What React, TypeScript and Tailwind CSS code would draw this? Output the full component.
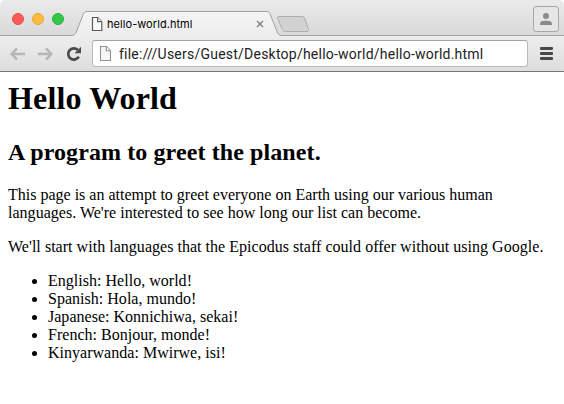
import React from "react";

const languages = [
  "English: Hello, world!",
  "Spanish: Hola, mundo!",
  "Japanese: Konnichiwa, sekai!",
  "French: Bonjour, monde!",
  "Kinyarwanda: Mwirwe, isi!",
];

function TabStrip() {
  return (
    <div className="relative flex h-[36px] bg-linear-to-b from-[#ebebeb] to-[#d9d9d9]">
      <div className="absolute inset-x-0 bottom-0 h-px bg-[#a5a5a5]" />
      <div className="flex w-[73px] gap-2 pt-[13px] pl-3">
        <span className="size-3 shrink-0 rounded-full border border-[#e94b48] bg-[#fc5b57]" />
        <span className="size-3 shrink-0 rounded-full border border-[#e5a336] bg-[#fdbc40]" />
        <span className="size-3 shrink-0 rounded-full border border-[#27b13b] bg-[#34c84a]" />
      </div>
      <div className="relative h-[36px] w-[208px]">
        <svg className="absolute inset-0" width="208" height="36" viewBox="0 0 208 36">
          <defs>
            <linearGradient id="tab" x1="0" y1="0" x2="0" y2="1">
              <stop offset="0" stopColor="#f5f5f5" />
              <stop offset="1" stopColor="#ededed" />
            </linearGradient>
          </defs>
          <path
            d="M-1 36V35.5C1.5 35.3 2.4 33.8 3.2 32L10 15C11 12.5 12 11.5 14 11.5H193C195.5 11.5 196.5 12.5 197.5 15L204 31.5C205 34 206 35.3 209 35.5V36Z"
            fill="url(#tab)"
          />
          <path
            d="M-1 35.5C1.5 35.3 2.4 33.8 3.2 32L10 15C11 12.5 12 11.5 14 11.5H193C195.5 11.5 196.5 12.5 197.5 15L204 31.5C205 34 206 35.3 209 35.5"
            fill="none"
            stroke="#a0a0a0"
          />
        </svg>
        <div className="relative flex h-full items-center pt-3 pr-[17px] pl-[18px]">
          <svg width="12" height="16" viewBox="0 0 12 16" fill="#fafafa" stroke="#5c5c5c" strokeWidth="1.2" className="shrink-0">
            <path d="M1.5 1.5h5.2l4.1 4.2v8.8H1.5z" />
            <path d="M6.6 1.5v4.2h4.2" />
          </svg>
          <span className="ml-1 flex-1 font-['Inter','Liberation_Sans',sans-serif] text-[11px] leading-4 tracking-[0.06px] whitespace-nowrap text-black">
            hello-world.html
          </span>
          <svg width="8" height="8" viewBox="0 0 8 8" stroke="#858585" strokeWidth="1.5">
            <path d="M1 1l6 6M7 1L1 7" />
          </svg>
        </div>
      </div>
      <svg className="mt-[15px] -ml-[5px]" width="34" height="18" viewBox="0 0 34 18">
        <path
          d="M3 1.5H26C27.5 1.5 28 2 28.6 3.4L32.4 13.5C33.1 15.4 32.7 16.5 31 16.5H9.5C8 16.5 7.1 16 6.5 14.5L1.7 3.5C1.2 2.1 1.5 1.5 3 1.5Z"
          fill="#d2d2d2"
          stroke="#adadad"
        />
      </svg>
      <div className="mt-[6px] mr-[5px] ml-auto flex h-[26px] w-[26px] items-center justify-center rounded-[3px] border border-[#a9a9a9] bg-[#e6e6e6]">
        <svg width="12" height="12" viewBox="0 0 12 12" fill="#8b8b8b">
          <circle cx="6" cy="3" r="3" />
          <path d="M0 12v-1C0 8.5 2.2 7.8 6 7.8s6 .7 6 3.2v1z" />
        </svg>
      </div>
    </div>
  );
}

function Toolbar() {
  return (
    <div className="flex h-[36px] items-center border-b border-[#777] bg-linear-to-b from-[#eeeeee] to-[#dddddd] px-[10px]">
      <svg width="15" height="14" viewBox="0 0 15 14" fill="none" stroke="#b6b6b6" strokeWidth="2.5">
        <path d="M7 1.3L1.7 7L7 12.7M2 7H15" />
      </svg>
      <svg className="ml-[13px]" width="15" height="14" viewBox="0 0 15 14" fill="none" stroke="#b6b6b6" strokeWidth="2.5">
        <path d="M8 1.3L13.3 7L8 12.7M13 7H0" />
      </svg>
      <svg className="ml-[13px]" width="16" height="16" viewBox="0 0 16 16" fill="none">
        <path d="M11.8 4A5.6 5.6 0 1 0 12.8 10.6" stroke="#4b4b4b" strokeWidth="2.7" />
        <path d="M15 .8V7.2H8.6z" fill="#4b4b4b" />
      </svg>
      <div className="ml-[10px] flex h-[27px] w-[436px] items-center rounded-[3px] border border-[#b9b9b9] border-t-[#a2a2a2] bg-white pl-[6px]">
        <svg width="13" height="17" viewBox="0 0 13 17" fill="#f6f6f6" stroke="#929292" strokeWidth="1.1" className="shrink-0">
          <path d="M1.5 1.5h6l4 4v10h-10z" />
          <path d="M7.3 1.5v4.2h4.2" />
        </svg>
        <span className="ml-[7px] font-['Roboto','Liberation_Sans',sans-serif] text-[14px] leading-5 tracking-[0.23px] whitespace-nowrap text-[#222]">
          file:///Users/Guest/Desktop/hello-world/hello-world.html
        </span>
      </div>
      <div className="ml-[12px] flex w-[13px] flex-col gap-[2px]">
        <span className="h-[3px] rounded-[1px] bg-[#494949]" />
        <span className="h-[3px] rounded-[1px] bg-[#494949]" />
        <span className="h-[3px] rounded-[1px] bg-[#494949]" />
      </div>
    </div>
  );
}

export default function App() {
  return (
    <div className="h-[404px] w-[564px] overflow-hidden bg-white">
      <header className="overflow-hidden rounded-t-[5px]">
        <TabStrip />
        <Toolbar />
      </header>
      <main className="px-2 font-['Liberation_Serif',serif] text-[16px] leading-[18px] text-black">
        <h1 className="pt-2 text-[32px] leading-[37px] font-bold tracking-[0.15px]">Hello World</h1>
        <h2 className="mt-[21px] text-[24px] leading-[28px] font-bold tracking-[0.1px]">A program to greet the planet.</h2>
        <p className="mt-5">
          This page is an attempt to greet everyone on Earth using our various human
          <br />
          <span className="tracking-[0.02px]">languages. We're interested to see how long our list can become.</span>
        </p>
        <p className="mt-4 tracking-[0.03px] whitespace-nowrap">
          We'll start with languages that the Epicodus staff could offer without using Google.
        </p>
        <ul className="mt-4 list-disc pl-10 tracking-[0.02px]">
          {languages.map((line) => (
            <li key={line}>{line}</li>
          ))}
        </ul>
      </main>
    </div>
  );
}
